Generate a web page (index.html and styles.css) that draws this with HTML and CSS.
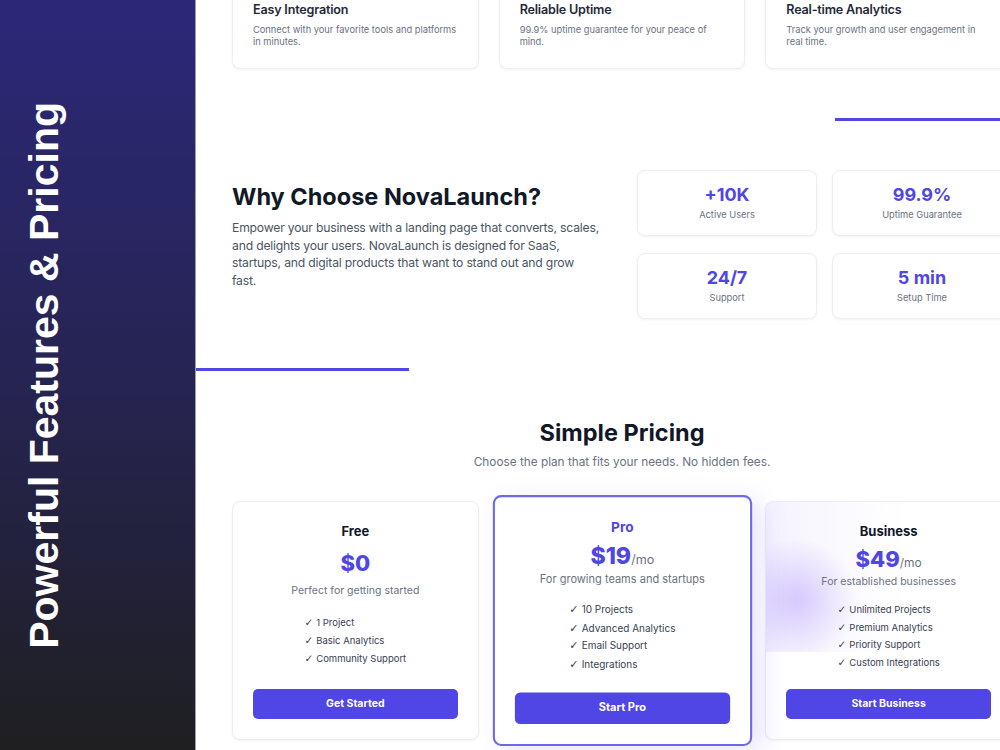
FILE: index.html
```html
<!DOCTYPE html>
<html>
<head>
    <title>NovaLaunch - Features &amp; Pricing</title>
    <link rel="stylesheet" href="styles.css">
</head>
<body>

<aside class="side">
    <h1 class="side-title">Powerful Features &amp; Pricing</h1>
</aside>

<main class="main">

    <section class="features">
        <div class="card feature">
            <h3>Easy Integration</h3>
            <p>Connect with your favorite tools and platforms in minutes.</p>
        </div>
        <div class="card feature">
            <h3>Reliable Uptime</h3>
            <p>99.9% uptime guarantee for your peace of mind.</p>
        </div>
        <div class="card feature">
            <h3>Real-time Analytics</h3>
            <p>Track your growth and user engagement in real time.</p>
        </div>
    </section>

    <div class="rule rule-right"></div>

    <section class="why">
        <div class="why-text">
            <h2>Why Choose NovaLaunch?</h2>
            <p>Empower your business with a landing page that converts, scales, and delights your users. NovaLaunch is designed for SaaS, startups, and digital products that want to stand out and grow fast.</p>
        </div>
        <div class="stats">
            <div class="card stat"><b>+10K</b><span>Active Users</span></div>
            <div class="card stat"><b>99.9%</b><span>Uptime Guarantee</span></div>
            <div class="card stat"><b>24/7</b><span>Support</span></div>
            <div class="card stat"><b>5 min</b><span>Setup Time</span></div>
        </div>
    </section>

    <div class="rule rule-left"></div>

    <section class="pricing">
        <h2>Simple Pricing</h2>
        <p class="sub">Choose the plan that fits your needs. No hidden fees.</p>

        <div class="plans">
            <div class="card plan">
                <h3>Free</h3>
                <div class="price">$0</div>
                <p class="plan-desc">Perfect for getting started</p>
                <ul>
                    <li>1 Project</li>
                    <li>Basic Analytics</li>
                    <li>Community Support</li>
                </ul>
                <a href="javascript:;" class="btn">Get Started</a>
            </div>
            <div class="card plan plan-pro">
                <h3>Pro</h3>
                <div class="price">$19<span>/mo</span></div>
                <p class="plan-desc">For growing teams and startups</p>
                <ul>
                    <li>10 Projects</li>
                    <li>Advanced Analytics</li>
                    <li>Email Support</li>
                    <li>Integrations</li>
                </ul>
                <a href="javascript:;" class="btn">Start Pro</a>
            </div>
            <div class="card plan plan-biz">
                <h3>Business</h3>
                <div class="price">$49<span>/mo</span></div>
                <p class="plan-desc">For established businesses</p>
                <ul>
                    <li>Unlimited Projects</li>
                    <li>Premium Analytics</li>
                    <li>Priority Support</li>
                    <li>Custom Integrations</li>
                </ul>
                <a href="javascript:;" class="btn">Start Business</a>
            </div>
        </div>
    </section>

</main>

</body>
</html>
```

FILE: styles.css
```css
html{ overflow: hidden;}
body{ margin: 0;width: 1048px;height: 750px;display: flex;background: #FFF;font-family: "Inter", "Noto Sans", sans-serif;color: #111827;}
h1, h2, h3, p, ul{ margin: 0;padding: 0;}

/* left strip with the rotated title */
.side{ width: 196px;flex-shrink: 0;display: flex;align-items: center;padding-left: 21px;box-sizing: border-box;
    background: linear-gradient(180deg, #2c2879 0%, #262452 50%, #1f1f21 100%);border-right: 1px solid #9d9bb5;}
.side-title{ writing-mode: vertical-rl;transform: rotate(180deg);font-family: "Liberation Sans", Arial, sans-serif;
    font-size: 41px;font-weight: bold;color: #FFF;white-space: nowrap;}

.main{ width: 852px;flex-shrink: 0;}

.card{ background: #FFF;border: 1px solid #eceef2;border-radius: 8px;box-shadow: 0 1px 3px rgba(17,24,39,.05);box-sizing: border-box;}

.rule{ width: 213px;height: 3px;background: #4f46e5;}
.rule-right{ margin-left: auto;}

/* features (page is scrolled a little) */
.features{ margin-top: -22px;padding: 0 36px 49px;display: grid;grid-template-columns: repeat(3, 1fr);gap: 20px;}
.feature{ padding: 20px;}
.feature h3{ font-size: 12.6px;font-weight: 600;line-height: 22px;letter-spacing: -.2px;color: #1f2937;}
.feature p{ margin-top: 3px;font-size: 9.3px;line-height: 12px;color: #6b7280;}

/* why section */
.why{ padding: 49px 36px;display: grid;grid-template-columns: 1fr 1fr;gap: 30px;align-items: center;}
.why-text h2{ font-size: 23.5px;font-weight: 700;line-height: 29px;color: #111827;margin-bottom: 8px;}
.why-text p{ max-width: 368px;font-size: 12.2px;line-height: 17.5px;letter-spacing: -.2px;color: #4b5563;margin-bottom: 18px;}
.stats{ display: grid;grid-template-columns: 1fr 1fr;gap: 17px 15px;}
.stat{ height: 66px;padding-top: 12px;text-align: center;}
.stat b{ display: block;font-size: 18px;font-weight: 700;line-height: 24px;color: #4f46e5;}
.stat span{ display: block;margin-top: 1px;font-size: 9.3px;line-height: 14px;color: #6b7280;}

/* pricing */
.pricing{ padding: 48px 36px 0;text-align: center;}
.pricing h2{ font-size: 23.5px;font-weight: 700;line-height: 28px;color: #111827;}
.pricing .sub{ margin-top: 6px;font-size: 11.8px;line-height: 18px;color: #6b7280;}
.plans{ margin-top: 30px;display: grid;grid-template-columns: repeat(3, 1fr);gap: 20px;}
.plan{ padding: 20px;display: flex;flex-direction: column;justify-content: space-between;}
.plan h3{ font-size: 13px;font-weight: 700;line-height: 18px;color: #111827;}
.price{ margin-top: 7px;font-size: 22px;font-weight: 800;line-height: 24px;color: #4f46e5;}
.price span{ font-size: 12px;font-weight: 400;line-height: 1;color: #6b7280;}
.plan-desc{ margin-top: 3px;font-size: 10.5px;line-height: 16px;color: #6b7280;}
.plan ul{ margin: 11px auto 0;list-style: none;text-align: left;}
.plan li{ font-size: 9.5px;line-height: 17.7px;color: #374151;}
.plan li::before{ content: "\2713";font-family: "DejaVu Sans", sans-serif;font-size: 10.5px;line-height: 1;margin-right: 3px;color: #374151;}
.btn{ display: block;margin-top: 17px;height: 30px;line-height: 30px;border-radius: 5px;background: #4f46e5;color: #FFF;
    font-size: 10.5px;font-weight: 700;text-decoration: none;}

.plan-pro{ transform: scale(1.05);border: 2px solid #7068e8;padding: 19px;box-shadow: 10px 6px 24px rgba(124,92,246,.16);z-index: 1;}
.plan-pro h3{ color: #4f46e5;}

/* soft glow behind the business plan */
.plan-biz{ position: relative;overflow: hidden;}
.plan-biz::before{ content: "";position: absolute;left: 0;top: 0;width: 140px;height: 150px;
    background: radial-gradient(circle at 30px 98px, rgba(167,139,250,.42), rgba(167,139,250,0) 62px),
                linear-gradient(90deg, rgba(237,233,254,.55), rgba(255,255,255,0));}
.plan-biz > *{ position: relative;}
```
